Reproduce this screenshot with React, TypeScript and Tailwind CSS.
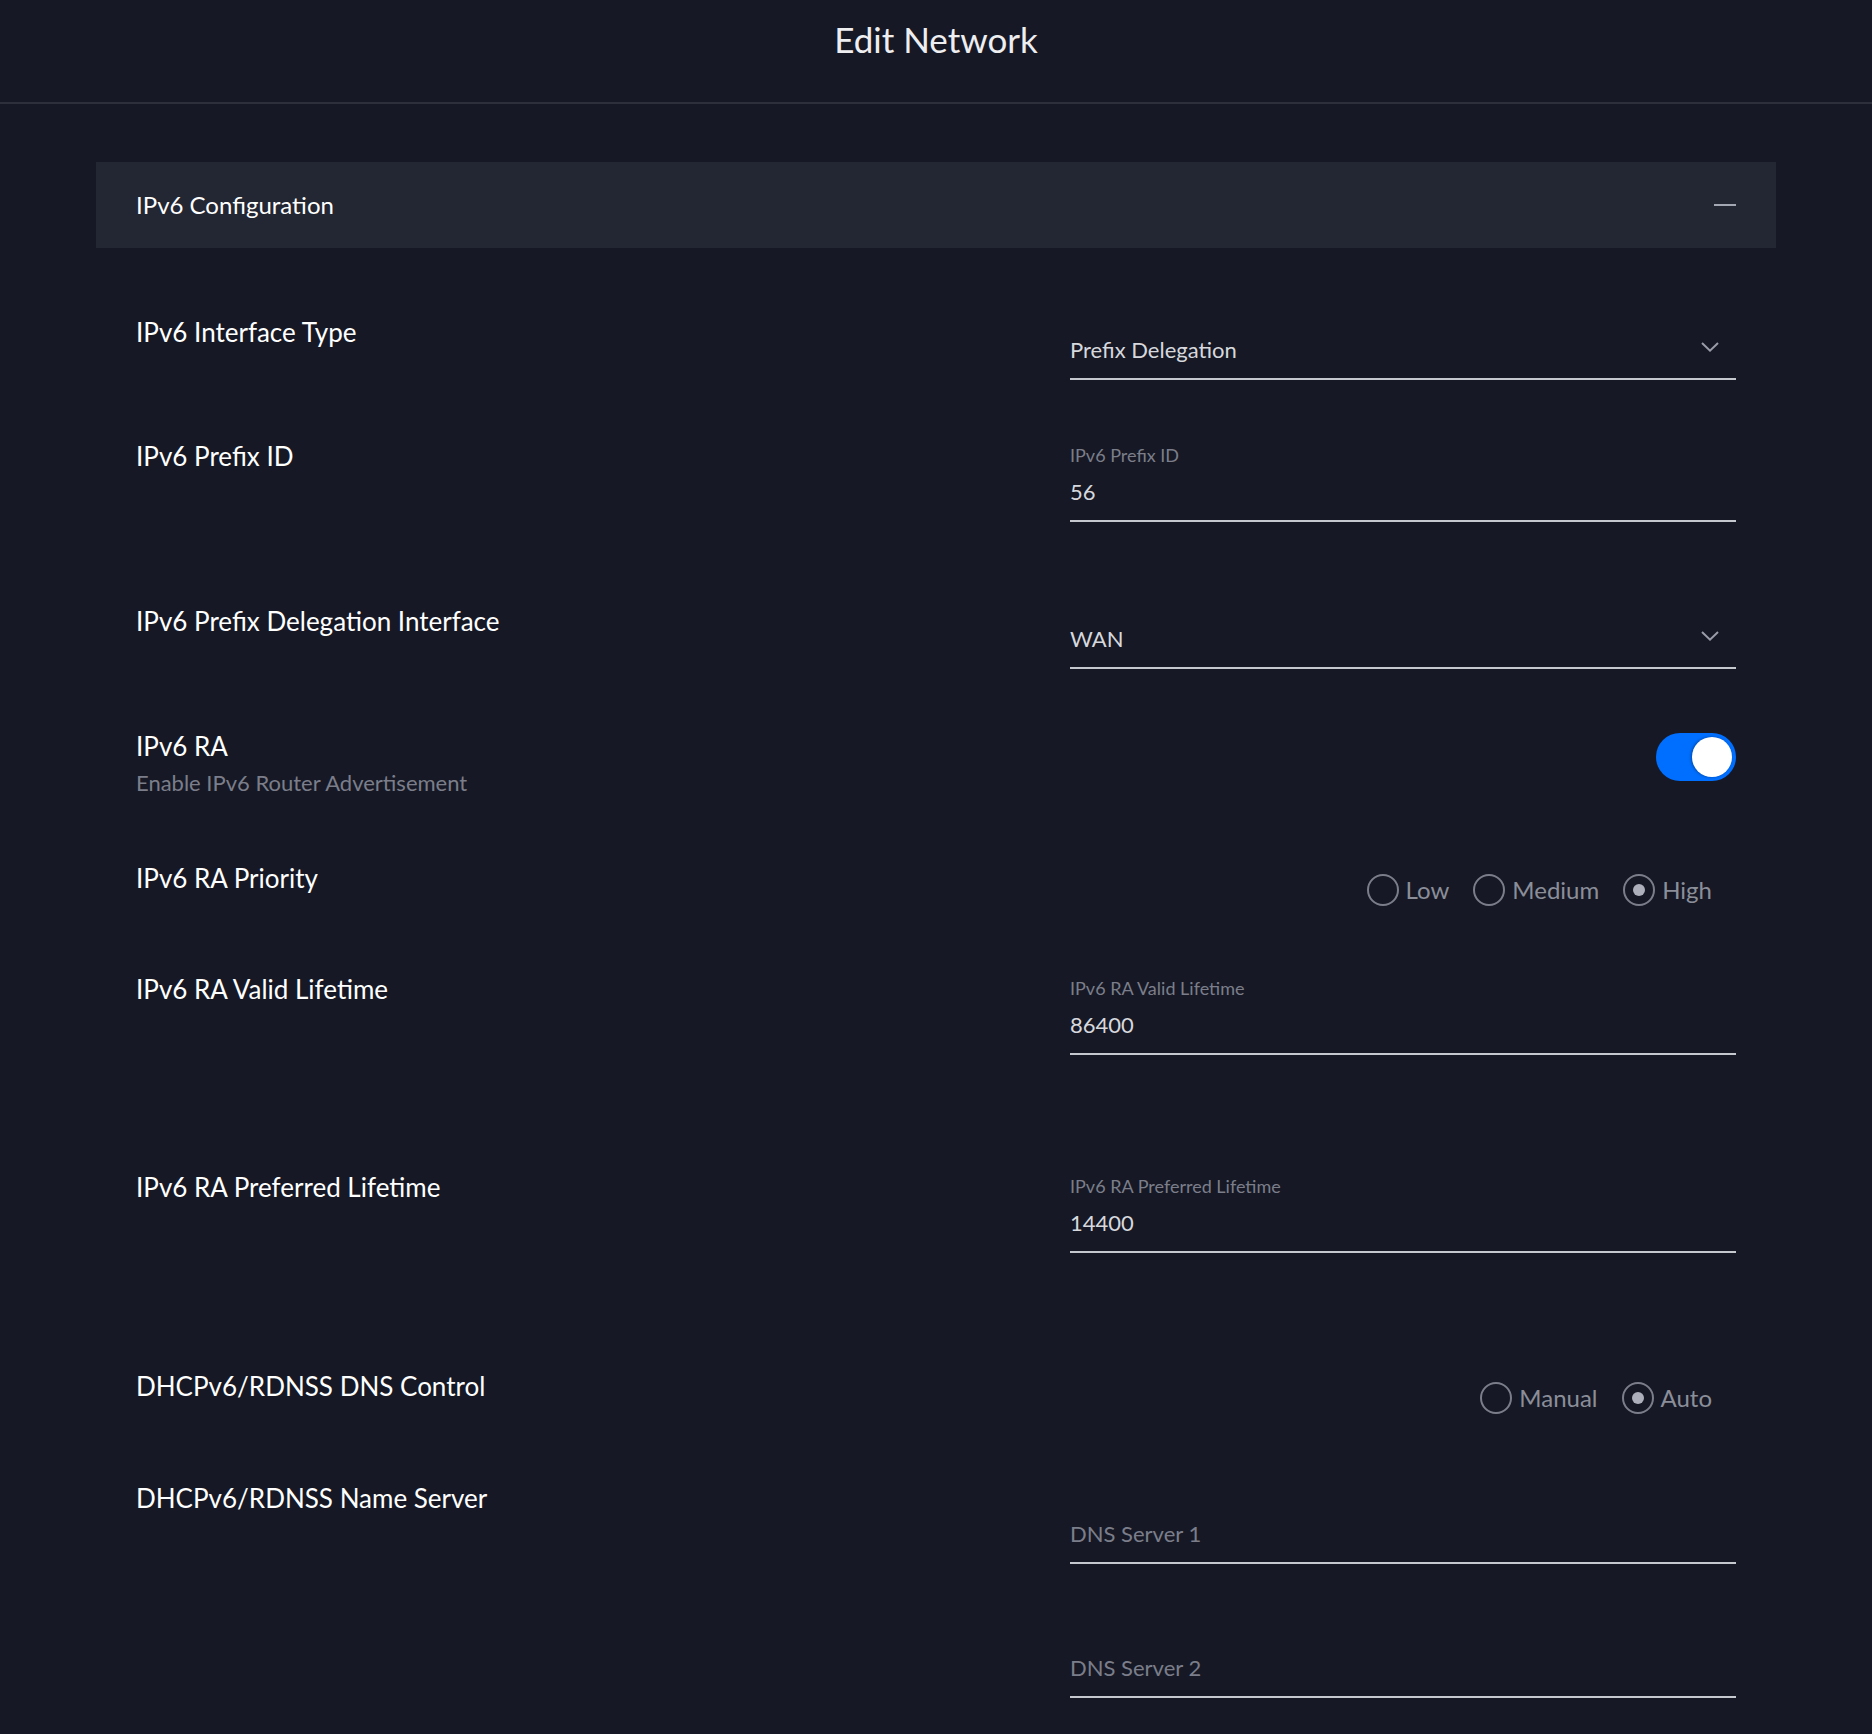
import React from "react";

const Chevron = () => (
  <svg width="18" height="10" viewBox="0 0 18 10" fill="none" className="mb-[6px] mr-[17px]">
    <path d="M1 1L9 8.6L17 1" stroke="#9a9da9" strokeWidth="2" />
  </svg>
);

function Row({
  className,
  label,
  sub,
  children,
}: {
  className: string;
  label: string;
  sub?: string;
  children: React.ReactNode;
}) {
  return (
    <div className={`flex items-start ${className}`}>
      <div className="flex-1">
        <div className="text-[26px] leading-[32px] text-white">{label}</div>
        {sub && <div className="mt-[7px] text-[22px] leading-[28px] text-[#7b7e8a]">{sub}</div>}
      </div>
      <div className="w-[666px]">{children}</div>
    </div>
  );
}

function Select({ value }: { value: string }) {
  return (
    <div className="pt-[20px]">
      <div className="flex items-center justify-between border-b-2 border-[#c6c8cf] pb-[14px]">
        <span className="text-[22px] leading-[28px] text-[#d6d8de]">{value}</span>
        <Chevron />
      </div>
    </div>
  );
}

function Input({
  label,
  value,
  placeholder,
  className,
}: {
  label?: string;
  value?: string;
  placeholder?: string;
  className: string;
}) {
  return (
    <div className={className}>
      <div className="border-b-2 border-[#c6c8cf] pb-[14px]">
        <div className="h-[24px] text-[18px] leading-[24px] text-[#7b7e8a]">{label}</div>
        {value ? (
          <div className="mt-[11px] text-[22px] leading-[28px] text-[#d6d8de]">{value}</div>
        ) : (
          <div className="mt-[11px] text-[22px] leading-[28px] text-[#7b7e8a]">{placeholder}</div>
        )}
      </div>
    </div>
  );
}

function Radio({ label, checked }: { label: string; checked?: boolean }) {
  return (
    <div className="mr-6 flex items-center">
      <div className="flex h-8 w-8 items-center justify-center rounded-full border-2 border-[#7b7e8a]">
        {checked && <div className="h-[12px] w-[12px] rounded-full bg-[#adb0bb]" />}
      </div>
      <span className="ml-[7px] text-[24px] leading-[28px] text-[#8b8e99]">{label}</span>
    </div>
  );
}

export default function App() {
  return (
    <div className="min-h-screen bg-[#161925] pb-[120px] font-[Lato,sans-serif]">
      <div className="h-[104px] border-b-2 border-[#2d303b] pt-[18px] text-center">
        <h1 className="text-[35px] leading-[42px] text-[#eeeef1]">Edit Network</h1>
      </div>
      <div className="px-[96px]">
        <div className="mt-[58px] flex h-[86px] items-center justify-between bg-[#232633] px-[40px]">
          <span className="text-[24px] leading-[30px] text-white">IPv6 Configuration</span>
          <div className="h-[2px] w-[22px] bg-[#a3a6b3]" />
        </div>
        <div className="px-[40px]">
          <Row className="mt-[68px]" label="IPv6 Interface Type">
            <Select value="Prefix Delegation" />
          </Row>
          <Row className="mt-[60px]" label="IPv6 Prefix ID">
            <Input className="pt-[3px]" label="IPv6 Prefix ID" value="56" />
          </Row>
          <Row className="mt-[83px]" label="IPv6 Prefix Delegation Interface">
            <Select value="WAN" />
          </Row>
          <Row className="mt-[61px]" label="IPv6 RA" sub="Enable IPv6 Router Advertisement">
            <div className="flex justify-end pt-[3px]">
              <div className="flex h-[48px] w-[80px] items-center justify-end rounded-full bg-[#006fff] pr-[4px]">
                <div className="h-[40px] w-[40px] rounded-full bg-white shadow-[-1px_0_3px_rgba(0,0,0,0.35)]" />
              </div>
            </div>
          </Row>
          <Row className="mt-[65px]" label="IPv6 RA Priority">
            <div className="mt-[12px] flex justify-end">
              <Radio label="Low" />
              <Radio label="Medium" />
              <Radio label="High" checked />
            </div>
          </Row>
          <Row className="mt-[67px]" label="IPv6 RA Valid Lifetime">
            <Input className="pt-[3px]" label="IPv6 RA Valid Lifetime" value="86400" />
          </Row>
          <Row className="mt-[116px]" label="IPv6 RA Preferred Lifetime">
            <Input className="pt-[3px]" label="IPv6 RA Preferred Lifetime" value="14400" />
          </Row>
          <Row className="mt-[117px]" label="DHCPv6/RDNSS DNS Control">
            <div className="mt-[12px] flex justify-end">
              <Radio label="Manual" />
              <Radio label="Auto" checked />
            </div>
          </Row>
          <Row className="mt-[68px]" label="DHCPv6/RDNSS Name Server">
            <Input className="pt-[3px]" placeholder="DNS Server 1" />
            <Input className="mt-[55px]" placeholder="DNS Server 2" />
          </Row>
        </div>
      </div>
    </div>
  );
}
